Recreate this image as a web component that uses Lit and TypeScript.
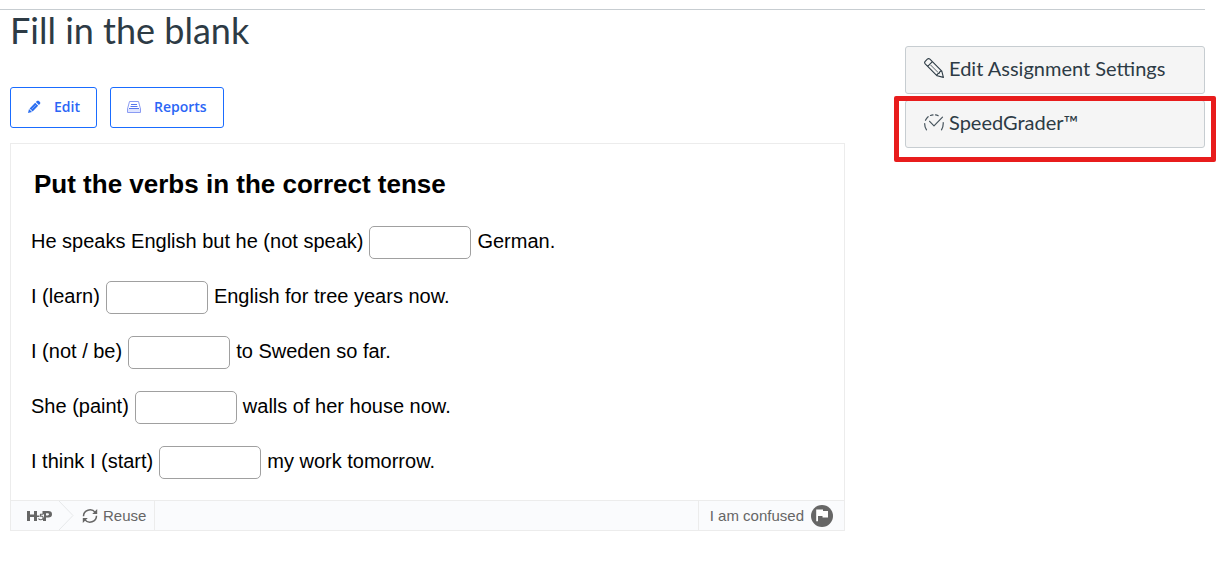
import { LitElement, html, css, svg } from "lit";
import { customElement } from "lit/decorators.js";

interface Blank {
  before: string;
  after: string;
}

const blanks: Blank[] = [
  { before: "He speaks English but he (not speak)", after: "German." },
  { before: "I (learn)", after: "English for tree years now." },
  { before: "I (not / be)", after: "to Sweden so far." },
  { before: "She (paint)", after: "walls of her house now." },
  { before: "I think I (start)", after: "my work tomorrow." },
];

const solidPencil = html`<svg width="14" height="14" viewBox="0 0 14 14" aria-hidden="true">
  ${svg`<path fill="#2a6df0" d="M1 13l1-4 3 3zM2.6 8.4l5.6-5.6 3 3-5.6 5.6zM8.9 2.1l1-1c.6-.6 1.4-.6 2 0l1 1c.6.6.6 1.4 0 2l-1 1z"/>
  <path stroke="#bcd0ff" stroke-width=".6" d="M4.5 9.4l4.600-4.600"/>`}
</svg>`;

const tray = html`<svg width="14" height="12" viewBox="0 0 14 12" aria-hidden="true">
  ${svg`<path fill="#dfe5ff" d="M1 8h12v3H1z"/>
  <path fill="none" stroke="#8a9bf3" d="M.5 11.500v-3.500L2.500.5h9l2 7.500v3.500z"/>
  <path stroke="#5675ee" d="M4 3.500h6M3.500 5.500h7M2 7.500h10"/>`}
</svg>`;

const linePencil = html`<svg width="20" height="20" viewBox="0 0 20 20" aria-hidden="true">
  ${svg`<g fill="none" stroke="#2d3b45" stroke-width="1.100" stroke-linejoin="round" stroke-linecap="round">
    <path d="M1.200 5.900Q0 4.600 1.200 3.300L3.300 1.200Q4.600 0 5.900 1.200L17.800 13.100 19.400 19.400 13.100 17.800zM3.700 8.400 8.400 3.700M13.100 17.800Q12.800 15.600 15.300 15.300 15.600 12.800 17.800 13.100"/>
    <path stroke-width=".8" d="M6.800 7.200 14 14.400"/>
  </g>`}
</svg>`;

const gauge = html`<svg width="20" height="17" viewBox="0 0 20 17" aria-hidden="true">
  ${svg`<g fill="none" stroke="#46535c" stroke-width="1.200" stroke-linecap="round" stroke-linejoin="round">
    <path d="M2.500 15.800Q.6 13.300.7 9.500M1.500 6.300Q2.500 4 4.100 2.700M6.500 1.500Q7.800 1 9 .9M11.500 .9Q13 1.100 14.200 1.700M17.500 15.800Q19.500 12.800 19.200 8.500"/>
    <path d="M5.600 7.300 10 11.800 18.500 3.200"/>
  </g>`}
</svg>`;

const h5p = html`<svg width="25" height="12" viewBox="0 0 25 12" role="img" aria-label="H5P">
  ${svg`<path fill="#666" d="M0 1h3v3.500h4V1h3v4.500h2v1.500h-2V11H7V7H3v4H0z"/>
  <path fill="#666" fill-rule="evenodd" d="M15.500 1h5.800Q25 1 25 4.200T21.300 7.400H19V11h-3V8.500L17 7V4h-1.500zM19 3.200v2.200h1.800Q22 5.400 22 4.300T20.800 3.200z"/>
  <path fill="none" stroke="#666" stroke-width="1.100" d="M16.500 4.200h-3l-.4 2.100Q16 5.600 16.100 7.700 15.900 9.900 13.600 9.700q-1.500 0-2.100-1.200"/>`}
</svg>`;

const reuse = html`<svg width="16" height="16" viewBox="0 0 16 16" aria-hidden="true">
  ${svg`<path fill="none" stroke="#666" stroke-width="1.500" d="M1.500 8.200A6.500 6.300 0 0 1 13.200 4.400M14.500 7.800A6.500 6.300 0 0 1 2.800 11.600"/>
  <path fill="#666" d="M15.200 1V6H10.200zM.8 15V10H5.800z"/>`}
</svg>`;

const flag = html`<svg width="22" height="22" viewBox="0 0 22 22" aria-hidden="true">
  ${svg`<circle cx="11" cy="11" r="11" fill="#666"/>
  <path fill="#fff" d="M5.200 4.500H12v1.500h5V12.500h-5.500V11H7v5.300H5.200z"/>`}
</svg>`;

@customElement("app-root")
export class AppRoot extends LitElement {
  static styles = css`
    :host {
      display: block;
      padding: 9px 15px 0 0;
      background: #fff;
      color: #2d3b45;
      font-family: Lato, sans-serif;
    }
    * {
      box-sizing: border-box;
    }
    .page {
      display: grid;
      grid-template-columns: minmax(0, 1fr) 300px;
      column-gap: 60px;
      padding-left: 10px;
      border-top: 1px solid #c7cdd1;
    }
    .title {
      margin: 0;
      font-size: 36px;
      line-height: 40px;
      font-weight: 400;
    }
    .tools {
      display: flex;
      gap: 13px;
      margin: 37px 0 15px;
    }
    .tool {
      display: flex;
      align-items: center;
      gap: 13px;
      height: 41px;
      padding: 0 16px 2px;
      border: 1px solid #1a6cff;
      border-radius: 3px;
      background: #fff;
      color: #2b66f6;
      font: 600 14px "Open Sans", sans-serif;
    }
    .card {
      border: 1px solid #ececec;
      font-family: "Liberation Sans", Arial, sans-serif;
      color: #000;
    }
    .exercise {
      padding: 24px 20px 21px;
    }
    .heading {
      margin: 0 0 25px;
      padding-left: 3px;
      font-size: 26px;
      line-height: 33px;
      font-weight: 700;
    }
    .list {
      display: grid;
      gap: 22px;
    }
    .row {
      display: flex;
      gap: 6px;
      font-size: 20px;
      line-height: 30px;
    }
    .blank {
      width: 102px;
      height: 33px;
      padding: 4px 8px;
      border: 1px solid #a0a0a0;
      border-radius: 5px;
      background: #fff;
      font: inherit;
    }
    .footer {
      display: flex;
      height: 30px;
      border-top: 1px solid #ececec;
      background: #fafbfd;
      color: #666;
    }
    .brand {
      display: flex;
      align-items: center;
      padding-left: 16px;
      color: #666;
    }
    .chevron {
      margin-left: 6px;
    }
    .action {
      display: flex;
      align-items: center;
      gap: 5px;
      padding: 0 8px;
      border: 0;
      border-right: 1px solid #ececec;
      background: none;
      color: inherit;
      font: 15px "Liberation Sans", Arial, sans-serif;
    }
    .confused {
      gap: 7px;
      margin-left: auto;
      padding: 0 11px;
      border-right: 0;
      border-left: 1px solid #ececec;
    }
    .side {
      display: grid;
      align-content: start;
      gap: 6px;
      padding-top: 36px;
    }
    .option {
      display: flex;
      align-items: center;
      gap: 5px;
      height: 48px;
      padding: 0 18px 4px;
      border: 1px solid #c7cdd1;
      border-radius: 3px;
      background: #f5f5f5;
      color: #2d3b45;
      font-size: 20px;
      line-height: 24px;
      text-decoration: none;
    }
    .marked {
      position: relative;
    }
    .marked::after {
      content: "";
      position: absolute;
      inset: -5px -12px -15px;
      border: 5px solid #e81c1c;
      border-radius: 2px;
    }
  `;

  render() {
    return html`
      <div class="page">
        <main>
          <h1 class="title">Fill in the blank</h1>
          <div class="tools">
            <button class="tool" type="button">${solidPencil}<span>Edit</span></button>
            <button class="tool" type="button">${tray}<span>Reports</span></button>
          </div>
          <section class="card">
            <div class="exercise">
              <h2 class="heading">Put the verbs in the correct tense</h2>
              <div class="list">
                ${blanks.map(
                  (b, i) => html`<div class="row">
                    <label for="blank-${i}">${b.before}</label>
                    <input class="blank" id="blank-${i}" type="text" autocomplete="off" />
                    <span>${b.after}</span>
                  </div>`
                )}
              </div>
            </div>
            <div class="footer">
              <a class="brand" href="#h5p">
                ${h5p}
                <svg class="chevron" width="16" height="29" viewBox="0 0 16 29" aria-hidden="true">
                  <path fill="none" stroke="#e6e8ea" d="M1 0l14 14.500L1 29" />
                </svg>
              </a>
              <button class="action" type="button">${reuse}<span>Reuse</span></button>
              <button class="action confused" type="button"><span>I am confused</span>${flag}</button>
            </div>
          </section>
        </main>
        <aside class="side">
          <a class="option" href="#settings">${linePencil}<span>Edit Assignment Settings</span></a>
          <a class="option marked" href="#speedgrader">${gauge}<span>SpeedGrader™</span></a>
        </aside>
      </div>
    `;
  }
}
